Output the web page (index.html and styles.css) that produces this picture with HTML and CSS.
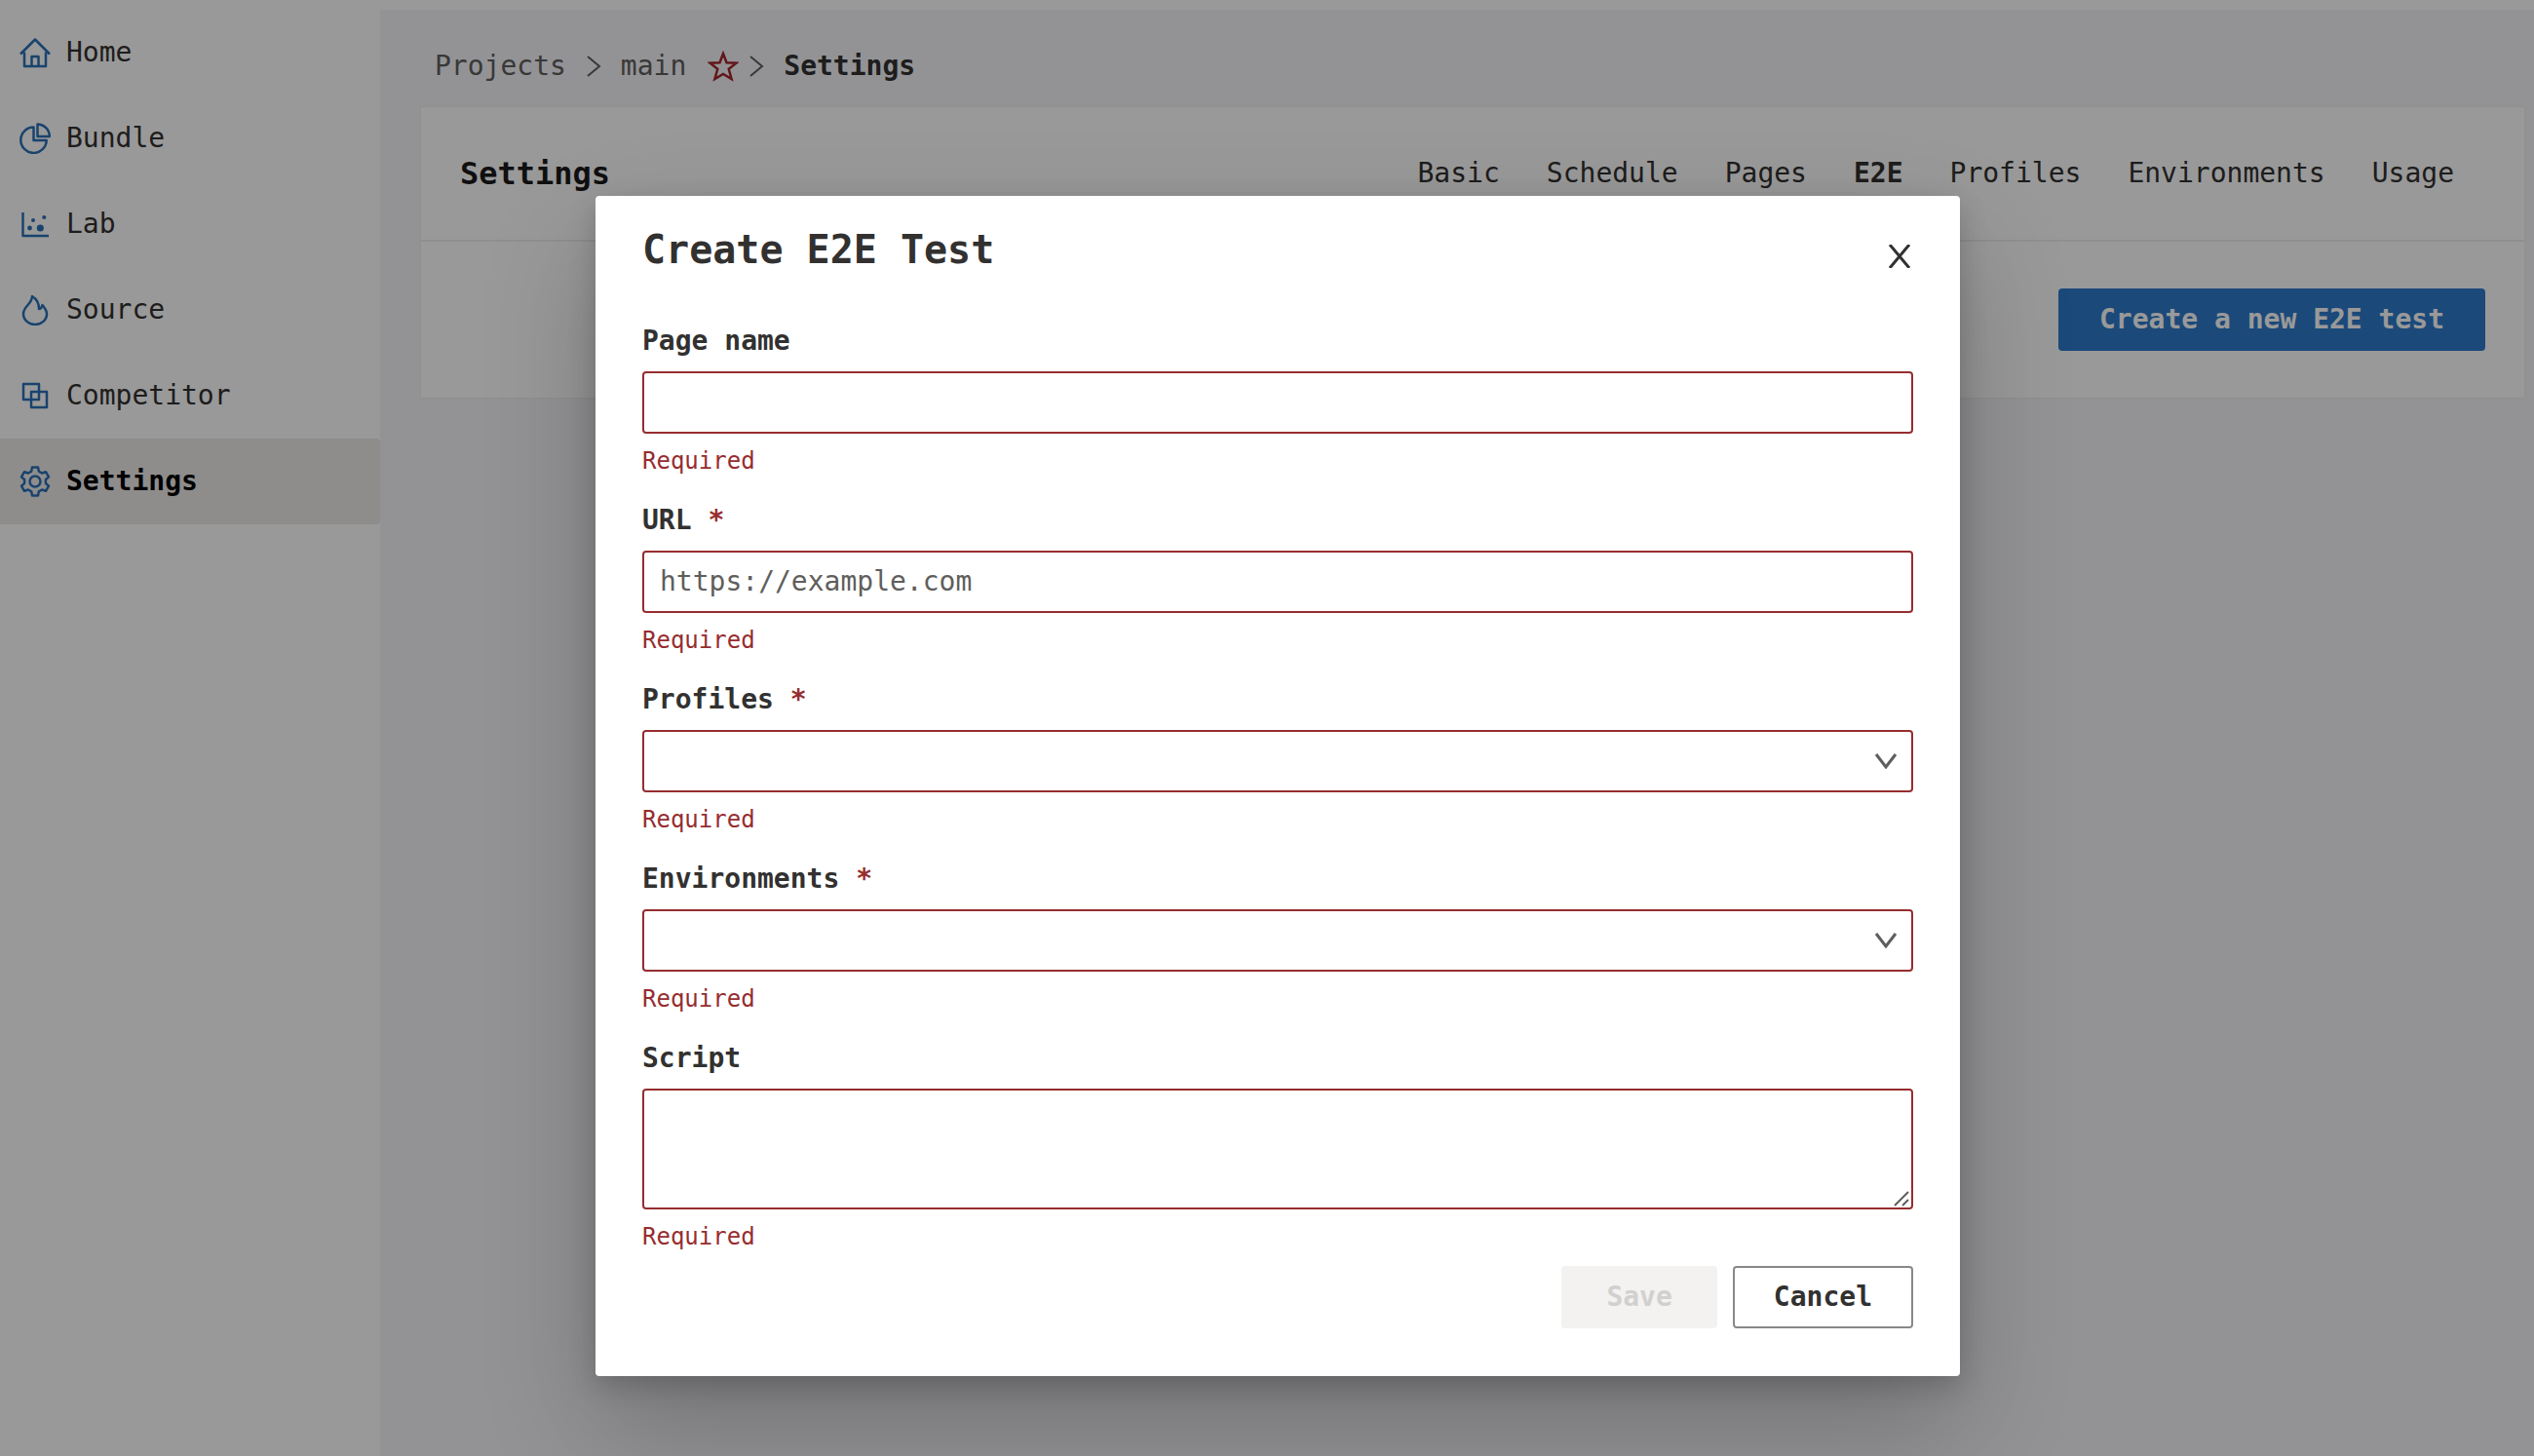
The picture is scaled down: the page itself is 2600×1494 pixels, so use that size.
FILE: index.html
```html
<!DOCTYPE html>
<html lang="en">
<head>
<meta charset="utf-8">
<title>Settings</title>
<link rel="stylesheet" href="styles.css">
</head>
<body>
<div class="app">
  <nav class="sidebar" aria-label="Main">
    <a class="nav-item" href="#"><svg class="icon" viewBox="0 0 32 32"><path d="M1 17.500 16 2.500 31 17.500M5 15.500V30H27V15.500M12.500 30V20H19.500V30"/></svg>Home</a>
    <a class="nav-item" href="#"><svg class="icon" viewBox="0 0 32 32"><path d="M14.500 4.500A13.200 13.200 0 1 0 27.700 18H14.500ZM18.500 1.500V14H30.800A12.500 12.500 0 0 0 18.500 1.500Z"/></svg>Bundle</a>
    <a class="nav-item" href="#"><svg class="icon" viewBox="0 0 32 32"><path d="M3.500 4V28H30"/><g class="solid"><circle cx="10.500" cy="20" r="2.400"/><circle cx="14" cy="12" r="2"/><circle cx="21.300" cy="20" r="3.600"/><circle cx="25.300" cy="9" r="2.100"/></g></svg>Lab</a>
    <a class="nav-item" href="#"><svg class="icon" viewBox="0 0 32 32"><path d="M13 2C18 5 20 9 20 15C22 15 23 13 23.500 11C26 14 28 17 28 20C28 26.500 22.500 31 16 31S4 26.500 4 20C4 12 13 10 13 2Z"/></svg>Source</a>
    <a class="nav-item" href="#"><svg class="icon" viewBox="0 0 32 32"><path d="M4 4H20V20H4ZM12 12H28V28H12Z"/></svg>Competitor</a>
    <a class="nav-item current" href="#" aria-current="page"><svg class="icon" viewBox="0 0 32 32"><path d="M13 1.500H19L19.800 5.600 23 7.500 27 6.200 30 11.400 27 14Q26.600 16 27 18L30 20.600 27 25.800 23 24.500 19.800 26.400 19 30.500H13L12.200 26.400 9 24.500 5 25.800 2 20.600 5 18Q5.400 16 5 14L2 11.400 5 6.200 9 7.500 12.200 5.600Z"/><circle cx="16" cy="16" r="5.500"/></svg>Settings</a>
  </nav>
  <main class="main">
    <nav class="crumbs" aria-label="Breadcrumb">
      <a href="#">Projects</a>
      <svg class="sep" viewBox="0 0 16 24"><path d="M2 2 14 12 2 22"/></svg>
      <a href="#">main</a>
      <button class="star" type="button" aria-label="Favorite"><svg viewBox="0 0 32 32"><path d="M16 3 19.500 12.300 29.500 12.700 21.700 18.800 24.600 29 16 24 7.400 29 10.300 18.800 2.500 12.700 12.500 12.300Z"/></svg></button>
      <svg class="sep" viewBox="0 0 16 24"><path d="M2 2 14 12 2 22"/></svg>
      <strong>Settings</strong>
    </nav>
    <section class="card">
      <header class="card-head">
        <h1>Settings</h1>
        <nav class="tabs" aria-label="Settings sections">
          <a href="#">Basic</a><a href="#">Schedule</a><a href="#">Pages</a><a class="current" href="#" aria-current="page">E2E</a><a href="#">Profiles</a><a href="#">Environments</a><a href="#">Usage</a>
        </nav>
      </header>
      <div class="card-body"><button class="btn primary" type="button">Create a new E2E test</button></div>
    </section>
  </main>
</div>
<div class="overlay">
  <form class="dialog" role="dialog" aria-modal="true" aria-labelledby="dialog-title">
    <header class="dialog-head">
      <h2 id="dialog-title">Create E2E Test</h2>
      <button class="close" type="button" aria-label="Close"><svg viewBox="0 0 24 24"><path d="M2 0 22 24M22 0 2 24"/></svg></button>
    </header>
    <div class="field">
      <label for="name">Page name</label>
      <input class="control" id="name" type="text">
      <p class="error">Required</p>
    </div>
    <div class="field">
      <label for="url">URL <span class="mark">*</span></label>
      <input class="control" id="url" type="text" placeholder="https://example.com">
      <p class="error">Required</p>
    </div>
    <div class="field">
      <label for="profiles">Profiles <span class="mark">*</span></label>
      <div class="select"><select class="control" id="profiles"><option></option></select><svg class="caret" viewBox="0 0 24 16"><path d="M2 1 12 14 22 1"/></svg></div>
      <p class="error">Required</p>
    </div>
    <div class="field">
      <label for="environments">Environments <span class="mark">*</span></label>
      <div class="select"><select class="control" id="environments"><option></option></select><svg class="caret" viewBox="0 0 24 16"><path d="M2 1 12 14 22 1"/></svg></div>
      <p class="error">Required</p>
    </div>
    <div class="field">
      <label for="script">Script</label>
      <div class="area"><textarea class="control" id="script"></textarea><svg class="grip" viewBox="0 0 16 16"><path d="M1 15 15 1M9 15 15 9"/></svg></div>
      <p class="error">Required</p>
    </div>
    <footer class="actions">
      <button class="btn" type="submit" disabled>Save</button>
      <button class="btn outline" type="button">Cancel</button>
    </footer>
  </form>
</div>
</body>
</html>
```
FILE: styles.css
```css
* { box-sizing: border-box; }
body {
  margin: 0;
  background: #fff;
  color: #323130;
  font: 28px/32px "DejaVu Sans Mono", monospace;
}
a { color: inherit; text-decoration: none; }
h1, h2, p { margin: 0; }
svg { display: block; fill: none; stroke: currentColor; stroke-width: 2; }
button, input, select, textarea { font: inherit; color: inherit; }

.app { display: flex; min-height: 100vh; padding-top: 10px; }
.sidebar { width: 390px; flex: none; }
.nav-item { display: flex; align-items: center; gap: 16px; height: 88px; padding: 0 20px; border-radius: 0 4px 4px 0; }
.nav-item.current { background: #edebe9; color: #000; font-weight: bold; }
.icon { width: 32px; height: 32px; color: #2b71b8; stroke-width: 2.5; stroke-linejoin: round; }
.icon .solid { fill: currentColor; stroke: none; }

.main { flex: 1; padding: 40px 8px 0 40px; background: #f5f5fa; }
.crumbs { display: flex; align-items: center; height: 36px; margin-bottom: 22px; padding-left: 16px; color: #605e5c; }
.crumbs strong { color: #323130; }
.sep { width: 16px; height: 24px; margin: 0 20px; }
.star { width: 32px; padding: 0; margin: 0 -10px 0 22px; border: 0; background: none; color: #a4262c; }
.star svg { stroke-width: 2.5; }

.card { border: 2px solid #f3f2f1; border-radius: 4px; background: #fff; }
.card-head { display: flex; align-items: center; justify-content: space-between; height: 138px; padding: 0 72px 0 40px; border-bottom: 2px solid #f0efee; }
.card-head h1 { font-size: 32px; color: #1b1a19; }
.tabs { display: flex; gap: 48px; }
.tabs .current { font-weight: bold; }
.card-body { display: flex; justify-content: flex-end; padding: 48px 40px; }

.btn { height: 64px; padding: 0 40px; border: 2px solid transparent; border-radius: 4px; font-weight: bold; }
.btn.primary { background: #2e7bcc; color: #fff; }
.btn.outline { border-color: #8a8886; background: #fff; }
.btn:disabled { padding: 0 44px; background: #f3f2f1; color: #d2d0ce; }

.overlay { position: absolute; inset: 0; display: flex; align-items: flex-start; justify-content: center; padding: 201px 0 0 22px; background: rgba(0, 0, 0, .4); }
.dialog { width: 1400px; max-width: 100%; padding: 31px 48px 49px; border-radius: 4px; background: #fff; box-shadow: 0 52px 116px rgba(0, 0, 0, .22), 0 10px 28px rgba(0, 0, 0, .18); }
.dialog-head { display: flex; justify-content: space-between; height: 102px; }
.dialog-head h2 { font-size: 40px; line-height: 48px; }
.close { width: 24px; height: 24px; margin: 19px 2px 0 0; padding: 0; border: 0; background: none; }
.close svg { width: 24px; height: 24px; stroke-width: 3; }

.field + .field { margin-top: 31px; }
.field label { display: block; margin-bottom: 15px; font-weight: bold; }
.mark { color: #962d2f; }
.control { display: block; width: 100%; height: 64px; padding: 0 16px 2px; border: 2px solid #962d2f; border-radius: 4px; outline: 0; background: #fff; appearance: none; }
.control::placeholder { color: #605e5c; opacity: 1; }
.select, .area { position: relative; }
.caret { position: absolute; right: 16px; top: 24px; width: 24px; height: 16px; color: #605e5c; stroke-width: 3; pointer-events: none; }
textarea.control { height: 124px; padding: 12px 16px; resize: none; }
.grip { position: absolute; right: 4px; bottom: 3px; width: 16px; height: 16px; color: #605e5c; stroke-width: 2; pointer-events: none; }
.error { margin-top: 14px; font-size: 24px; line-height: 28px; color: #962d2f; }
.actions { display: flex; justify-content: flex-end; gap: 16px; margin-top: 16px; }
```
